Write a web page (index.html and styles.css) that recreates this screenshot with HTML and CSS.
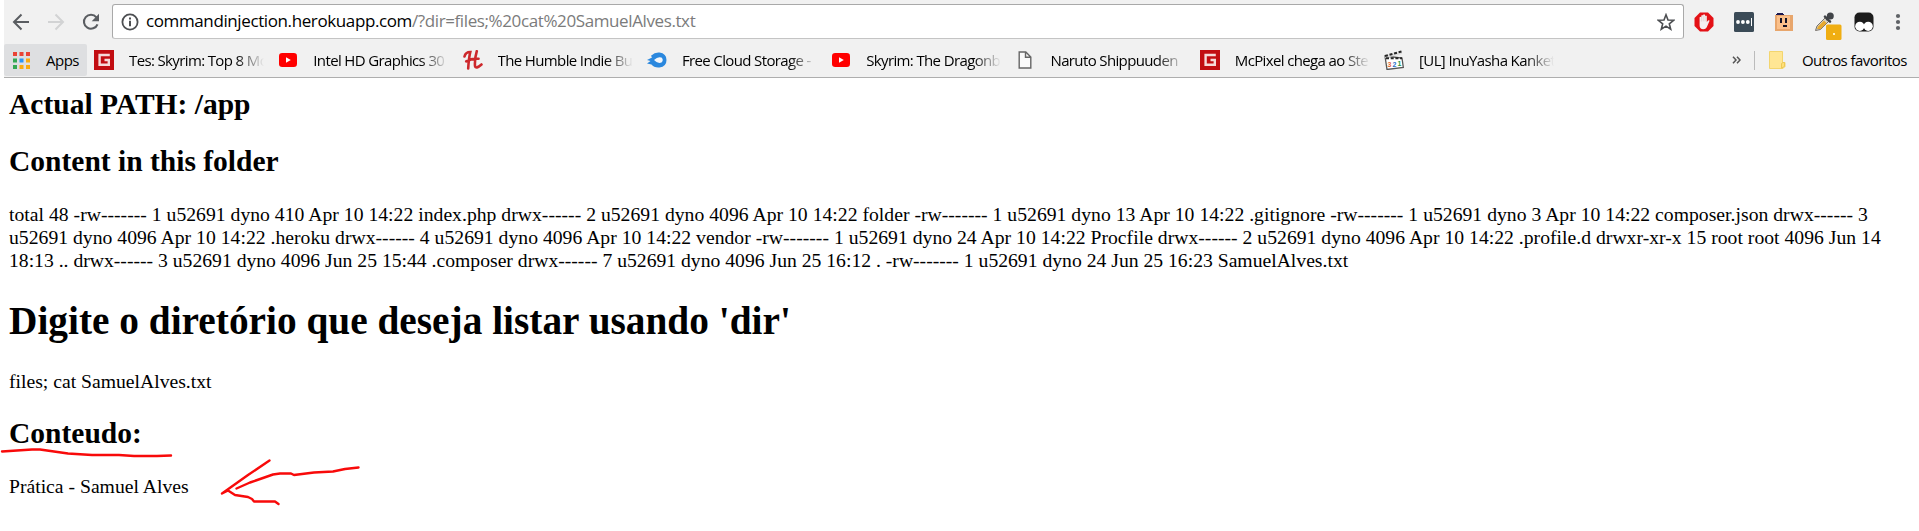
FILE: index.html
```html
<!DOCTYPE html>
<html lang="pt-BR">
<head>
<meta charset="utf-8">
<title>commandinjection.herokuapp.com</title>
<link rel="stylesheet" href="styles.css">
</head>
<body>
<svg class="defs" width="0" height="0" aria-hidden="true">
  <symbol id="gs" viewBox="0 0 20 20"><path fill="#c20d12" d="M0 0h20v20H0z"/><path d="M15.800 5H5.600v9.800h9.200V10H10.500" fill="none" stroke="#f6d9d9" stroke-width="2.400"/></symbol>
  <symbol id="yt" viewBox="0 0 20 20"><rect x="1" y="3" width="18" height="14" rx="3.200" fill="#f00"/><path fill="#fff" d="M8 7.200v5.600l4.800-2.800z"/></symbol>
</svg>
<header class="chrome">
  <div class="toolbar">
    <nav class="nav">
      <svg width="18" height="18" viewBox="0 0 18 18"><path d="M17 9H2M9.500 1.500 2 9l7.500 7.500" fill="none" stroke="#5a5d61" stroke-width="2"/></svg>
      <svg width="18" height="18" viewBox="0 0 18 18"><path d="M1 9h15M8.500 1.500 16 9l-7.500 7.500" fill="none" stroke="#d2d3d4" stroke-width="2"/></svg>
      <svg width="18" height="18" viewBox="0 0 18 18"><path d="M14.400 4.300A7 7 0 1 0 15.500 11.300" fill="none" stroke="#5a5d61" stroke-width="2.100"/><path fill="#5a5d61" d="M17 .8v7.400H9.700z"/></svg>
    </nav>
    <div class="omnibox">
      <svg width="18" height="18" viewBox="0 0 18 18"><circle cx="9" cy="9" r="7.600" fill="none" stroke="#4d4f52" stroke-width="1.800"/><path d="M9 7.800v5.400M9 4.600v1.900" stroke="#4d4f52" stroke-width="2"/></svg>
      <span class="url">commandinjection.herokuapp.com<span class="path">/?dir=files;%20cat%20SamuelAlves.txt</span></span>
      <svg class="star" width="18" height="18" viewBox="0 0 18 18"><path d="m9 1.800 2 5.200 5.600.3-4.300 3.500 1.400 5.400L9 13.200l-4.700 3 1.400-5.400L1.400 7.300 7 7z" fill="none" stroke="#4d4f52" stroke-width="1.600"/></svg>
    </div>
    <div class="extensions">
      <svg width="20" height="20" viewBox="0 0 20 20"><path d="M6 .5h8L19.500 6v8L14 19.500H6L.5 14V6z" fill="#e41116"/><path d="M5.600 10.500V5.300q.9-1.300 1.700 0V3.700q.9-1.400 1.800 0v-.8q1-1.300 1.900 0v1.200q1-1.200 1.800 0v6l1.200-1.600q1.300-.8 1.600.3l-2.400 5.500q-1 2.900-3.900 2.900-3.700 0-3.700-3.700z" fill="#f4f0f0"/><path d="M7.400 5v4.500M9.200 4v5.300M11.100 4v5.300" stroke="#d5bcbc" stroke-width=".5"/></svg>
      <svg width="20" height="20" viewBox="0 0 20 20"><rect width="20" height="20" rx="1.500" fill="#3b4b57"/><g fill="#fff"><circle cx="4" cy="10" r="1.900"/><circle cx="8.900" cy="10" r="1.900"/><circle cx="13.800" cy="10" r="1.900"/><path d="M17 6h1v8h-1z"/></g></svg>
      <svg width="20" height="20" viewBox="0 0 20 20"><path fill="#1c1950" d="M3 1h6v2H3zM2 2h8v2H2z"/><path fill="#e8a66c" d="M1 3h18v16H1z"/><path fill="#fbc08a" d="M3 4h13v13H3z"/><path fill="#151426" d="M6 6h2v5H6zM11 6h2v5h-2zM9 13h4v2H9z"/></svg>
      <svg class="picker" width="28" height="28" viewBox="0 0 28 28"><path d="M1.500 18.500 3 14l9-9 3.500 3.500-9 9z" fill="#d9d3c5" stroke="#77716a"/><path d="m3 17 1-2.600 6-6 2.600 2.600-6 6z" fill="#e7a92d"/><path d="m11 4.600 5 5M13.200 7.400l3-3" stroke="#414448" stroke-width="2.600" stroke-linecap="round"/><circle cx="16.300" cy="4" r="3.500" fill="#414448"/><rect x="12" y="12.500" width="15.500" height="15.500" rx="1.500" fill="#f0ae12"/><path fill="#fff0c2" d="M19 21h2v2h-2z"/></svg>
      <svg width="20" height="20" viewBox="0 0 20 20"><rect x=".5" y=".5" width="19" height="19" rx="5" fill="#1c1c1c"/><circle cx="5.800" cy="14.300" r="4.600" fill="#fff"/><circle cx="14.200" cy="14.300" r="4.600" fill="#fff"/></svg>
      <svg class="kebab" width="6" height="18" viewBox="0 0 6 18" fill="#5f6266"><circle cx="3" cy="3" r="2.100"/><circle cx="3" cy="9" r="2.100"/><circle cx="3" cy="15" r="2.100"/></svg>
    </div>
  </div>
  <div class="bookmarks">
    <div class="apps">
      <svg width="17" height="17" viewBox="0 0 17 17"><path fill="#ea4335" d="M0 0h4v4H0zM6.500 0h4v4h-4zM13 0h4v4h-4z"/><path fill="#34a853" d="M0 6.500h4v4H0zM0 13h4v4H0z"/><path fill="#2b95f5" d="M6.500 6.500h4v4h-4z"/><path fill="#f9ab10" d="M13 6.500h4v4h-4zM6.500 13h4v4h-4zM13 13h4v4h-4z"/></svg>
      <span class="t-apps">Apps</span>
    </div>
    <div class="items">
      <div class="item"><svg class="ic"><use href="#gs"/></svg><span class="label">Tes: Skyrim: Top 8 Mo</span></div>
      <div class="item"><svg class="ic"><use href="#yt"/></svg><span class="label">Intel HD Graphics 30</span></div>
      <div class="item"><svg class="ic" viewBox="0 0 20 20"><path d="M1.500 6.500Q2.500 2 7.300 2 5.800 8 5.200 18.500M13.800 1.200Q11.500 9 12 16q.8 3.500 6.500-1.500M3.200 11.400Q9 8 15.500 8.800" fill="none" stroke="#cd282c" stroke-width="2.600" stroke-linecap="round"/></svg><span class="label">The Humble Indie Bu</span></div>
      <div class="item"><svg class="ic" viewBox="0 0 20 20"><path d="M4 5.700Q8 2 12.500 2.500 19.500 3.500 19.500 10T12.500 17.500Q7 18 4.500 14.500L0 13.500 3.500 11 0 10l5-2.500z" fill="#2b88de"/><path d="M7 10q4-4 7.500-2.400 2.500 2.400 0 4.900Q11 14.200 7 10z" fill="#f3f7fc"/></svg><span class="label">Free Cloud Storage -</span></div>
      <div class="item"><svg class="ic"><use href="#yt"/></svg><span class="label">Skyrim: The Dragonb</span></div>
      <div class="item"><svg class="ic" viewBox="0 0 20 20"><path d="M4.200 2h6.600l5 5v11H4.200zM10.500 2v5.300h5.300" fill="#fafafa" stroke="#666" stroke-width="1.400"/></svg><span class="label">Naruto Shippuuden</span></div>
      <div class="item"><svg class="ic"><use href="#gs"/></svg><span class="label">McPixel chega ao Ste</span></div>
      <div class="item"><svg class="ic" viewBox="0 0 20 20"><path d="m1 6 17 2 1.300 9.500L3 19.500z" fill="#fff" stroke="#555" stroke-width="1.300"/><path d="m.5 5.500 17-4 .5 2.500L1.500 8z" fill="#ddd"/><path d="m1 6 16.500-4.500M2 8.300h16" stroke="#252525" stroke-width="2" stroke-dasharray="3 1.700"/><g class="digits"><text x="3.600" y="17" fill="#e36331">3</text><text x="8.600" y="16.500" fill="#2970c9">2</text><text x="13.600" y="16" fill="#24963b">1</text></g></svg><span class="label">[UL] InuYasha Kanket</span></div>
    </div>
    <svg class="more" width="9" height="8" viewBox="0 0 9 8"><path d="m1 .8 3 3.200-3 3.200M5 .8 8 4 5 7.200" fill="none" stroke="#555" stroke-width="1.500"/></svg>
    <div class="others">
      <svg width="17" height="18" viewBox="0 0 17 18"><path d="M.5.5h13v11H16v4l-2 2H.5z" fill="#ffe694" stroke="#f3d56e"/><path d="M12.500 17v-4.500l1.500-1h1.500v4z" fill="#ffe07a" stroke="#edc955"/></svg>
      <span class="t-others">Outros favoritos</span>
    </div>
  </div>
</header>
<main class="page">
  <h2 class="t-path">Actual PATH: /app</h2>
  <h2 class="t-content">Content in this folder</h2>
  <p><span class="wide">total 48 -rw------- 1 u52691 dyno 410 Apr 10 14:22 index.php drwx------ 2 u52691 dyno 4096 Apr 10 14:22 folder -rw------- 1 u52691 dyno 13 Apr 10 14:22 .gitignore -rw------- 1 u52691 dyno 3 Apr 10 14:22 composer.json drwx------ 3<br>u52691 dyno 4096 Apr 10 14:22 .heroku drwx------ 4 u52691 dyno 4096 Apr 10 14:22 vendor -rw------- 1 u52691 dyno 24 Apr 10 14:22 Procfile drwx------ 2 u52691 dyno 4096 Apr 10 14:22 .profile.d drwxr-xr-x 15 root root 4096 Jun 14</span><br>18:13 .. drwx------ 3 u52691 dyno 4096 Jun 25 15:44 .composer drwx------ 7 u52691 dyno 4096 Jun 25 16:12 . -rw------- 1 u52691 dyno 24 Jun 25 16:23 SamuelAlves.txt</p>
  <h1>Digite o diretório que deseja listar usando 'dir'</h1>
  <p class="t-files">files; cat SamuelAlves.txt</p>
  <h2 class="t-result">Conteudo:</h2>
  <p>Prática - Samuel Alves</p>
  <svg class="marks" width="400" height="90" viewBox="0 440 400 90" fill="none" stroke="#f80a0a" stroke-width="2.400" stroke-linecap="round" stroke-linejoin="round"><path d="M2 451.500 32 449.500H40L68 453.500 92 455H119L134 456H157L171 455.500"/><path d="M269.500 460.500 248 475 222 493.500 228 490.500 235 495 248 497 252 499 254 501.500H275L278.500 504"/><path d="M236.500 488.500 250 482.500 273 474.500 280 473.500H291L294 475 314 472.500 333 471.500 345 469 358.500 467.500"/></svg>
</main>
</body>
</html>
```
FILE: styles.css
```css
* { box-sizing: border-box; }
body {
  margin: 0;
  height: 531px;
  overflow: hidden;
  background: #fff;
  color: #000;
  font: 19.670px/23px "Liberation Serif", "Times New Roman", serif;
}
svg { display: block; flex: none; }
.defs { position: absolute; }

.chrome {
  margin-left: 4px;
  height: 78px;
  background: #f1f1f1;
  border-bottom: 1px solid #aeaeae;
  font: 15px/20px "Open Sans", "Noto Sans", sans-serif;
  white-space: nowrap;
}
.toolbar { display: flex; height: 44px; padding-top: 4px; }
.nav { display: flex; gap: 17px; width: 108px; padding: 9px 0 0 8px; }
.omnibox {
  display: flex;
  align-items: center;
  width: 1572px;
  height: 35px;
  padding: 0 8px;
  background: #fff;
  border: 1px solid #a9a9a9;
  border-bottom-color: #c4c4c4;
  border-radius: 3px;
}
.url { margin: -1px 0 0 7px; font-size: 17px; letter-spacing: -0.390px; }
.path { color: #7b7b7b; }
.star { margin-left: auto; }
.extensions { display: flex; gap: 20px; padding: 8px 0 0 10px; }
.picker { margin-right: -8px; }
.kebab { margin: 1px 0 0 1px; }

.bookmarks { display: flex; align-items: center; height: 32px; }
.apps {
  display: flex;
  align-items: center;
  width: 83px;
  height: 32px;
  padding-left: 9px;
  background: #dedfe1;
  border-radius: 2px;
}
.t-apps { margin-left: 16px; letter-spacing: -0.500px; }
.items {
  display: grid;
  grid-template-columns: repeat(8, 184.300px);
  width: 1638px;
  margin-left: 7px;
}
.item { display: flex; align-items: center; }
.ic { width: 20px; height: 20px; }
.label {
  width: 135px;
  margin: -1px 0 0 15px;
  letter-spacing: -0.630px;
  -webkit-mask-image: linear-gradient(to right, #000 107px, transparent 135px);
  mask-image: linear-gradient(to right, #000 107px, transparent 135px);
}
.digits { font: bold 7px "Liberation Sans", sans-serif; }
.more { margin-top: -1px; }
.others {
  display: flex;
  align-items: center;
  height: 19px;
  margin-left: 13px;
  padding-left: 14px;
  border-left: 1px solid #bbb;
}
.t-others { margin: -1px 0 0 16px; letter-spacing: -0.550px; }

.page { position: relative; padding: 10px 0 0 9px; }
h1, h2, p { margin: 0 0 26px; white-space: nowrap; }
h1 { font-size: 39.350px; line-height: 46px; }
h2 { font-size: 29.500px; line-height: 33px; }
.t-path { margin-bottom: 24px; }
.t-content { margin-bottom: 25px; }
.wide { letter-spacing: 0.017px; }
.t-files { margin-bottom: 24px; }
.t-result { margin-bottom: 25px; }
.marks { position: absolute; left: 0; top: 362px; }
```
